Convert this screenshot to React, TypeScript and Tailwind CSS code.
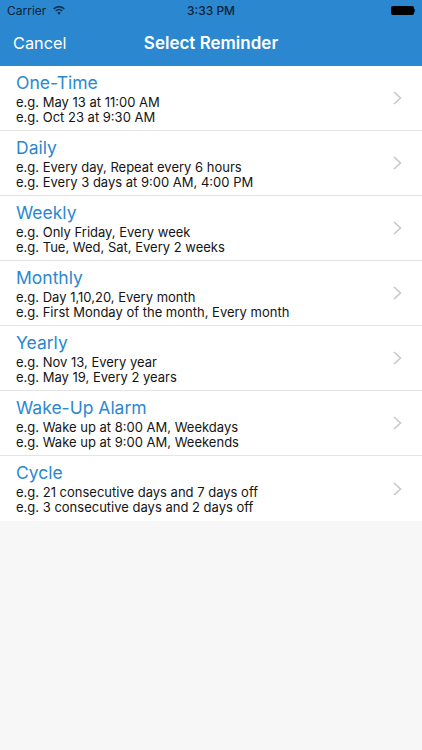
const reminders = [
  { title: 'One-Time', lines: ['e.g. May 13 at 11:00 AM', 'e.g. Oct 23 at 9:30 AM'] },
  { title: 'Daily', lines: ['e.g. Every day, Repeat every 6 hours', 'e.g. Every 3 days at 9:00 AM, 4:00 PM'] },
  { title: 'Weekly', lines: ['e.g. Only Friday, Every week', 'e.g. Tue, Wed, Sat, Every 2 weeks'] },
  { title: 'Monthly', lines: ['e.g. Day 1,10,20, Every month', 'e.g. First Monday of the month, Every month'] },
  { title: 'Yearly', lines: ['e.g. Nov 13, Every year', 'e.g. May 19, Every 2 years'] },
  { title: 'Wake-Up Alarm', lines: ['e.g. Wake up at 8:00 AM, Weekdays', 'e.g. Wake up at 9:00 AM, Weekends'] },
  { title: 'Cycle', lines: ['e.g. 21 consecutive days and 7 days off', 'e.g. 3 consecutive days and 2 days off'] },
];

function WifiIcon() {
  return (
    <svg width="12" height="9" viewBox="0 0 14 10" fill="#0b2a45">
      <path d="M7 10 4.9 7.6a3.1 3.1 0 0 1 4.2 0L7 10Z" />
      <path d="M3.7 6.3 2.6 5a6.6 6.6 0 0 1 8.8 0l-1.1 1.3a4.9 4.9 0 0 0-6.6 0Z" />
      <path d="M1.4 3.7.3 2.4a10.1 10.1 0 0 1 13.4 0l-1.1 1.3a8.4 8.4 0 0 0-11.2 0Z" />
    </svg>
  );
}

function Chevron() {
  return (
    <svg width="9" height="14" viewBox="0 0 9 14" fill="none" stroke="#c7c7cc" strokeWidth="1.6">
      <path d="M1 1l6.5 6L1 13" />
    </svg>
  );
}

function StatusBar() {
  return (
    <div className="grid h-[21px] grid-cols-3 items-center px-[7px] text-[12px] text-[#0b2238]">
      <div className="flex items-center gap-[7px]">
        <span>Carrier</span>
        <WifiIcon />
      </div>
      <span className="text-center font-medium">3:33 PM</span>
      <div className="flex items-center justify-end">
        <div className="h-[9px] w-[23px] rounded-[2px] bg-black" />
        <div className="h-[3px] w-[1px] bg-[#0b2238]" />
      </div>
    </div>
  );
}

function ReminderRow({ title, lines }: { title: string; lines: string[] }) {
  return (
    <div className="flex h-[65px] items-center justify-between border-b border-[#e4e4e4] pl-[16px] pr-[20px] last:border-b-0">
      <div>
        <div className="mb-[2px] text-[17.5px] leading-[21px] text-[#2b88d0]">{title}</div>
        {lines.map((line) => (
          <div key={line} className="text-[13px] leading-[15px] text-[#141414]">
            {line}
          </div>
        ))}
      </div>
      <Chevron />
    </div>
  );
}

export default function App() {
  return (
    <div className="flex h-[750px] w-[422px] flex-col bg-[#f7f7f7] font-['Inter',sans-serif]">
      <header className="h-[66px] bg-[#2b88d0]">
        <StatusBar />
        <div className="relative flex h-[45px] items-center justify-center">
          <span className="absolute left-[13px] top-[11px] text-[16.3px] leading-[22px] text-white">Cancel</span>
          <span className="text-[17px] font-semibold text-white">Select Reminder</span>
        </div>
      </header>
      <main className="bg-white">
        {reminders.map((r) => (
          <ReminderRow key={r.title} title={r.title} lines={r.lines} />
        ))}
      </main>
    </div>
  );
}
